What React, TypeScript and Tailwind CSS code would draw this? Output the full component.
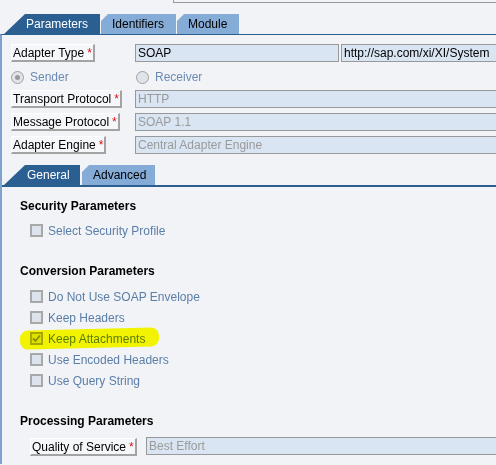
import React from 'react';

const FONT = "font-['Liberation_Sans',Arial,sans-serif]";

function LabelButton({ text, className = '' }: { text: string; className?: string }) {
  return (
    <div className={`h-[18px] flex items-center pl-[1px] pr-[1px] bg-[#f6f7fa] border-t border-l border-t-[#ffffff] border-l-[#ffffff] border-r-2 border-b-2 border-r-[#a3a3a3] border-b-[#a3a3a3] text-black whitespace-nowrap ${className}`}>
      {text}
      <span className="text-[#e01010] ml-[3px]">*</span>
    </div>
  );
}

function Field({ value, disabled, className = '' }: { value: string; disabled?: boolean; className?: string }) {
  return (
    <div className={`h-[18px] flex items-center px-[2px] bg-[#d9e5f3] border border-[#999999] whitespace-nowrap overflow-hidden ${disabled ? 'text-[#9a9a9a]' : 'text-black'} ${className}`}>
      {value}
    </div>
  );
}

function Radio({ checked }: { checked?: boolean }) {
  return (
    <span className="w-[13px] h-[13px] rounded-full border border-[#a0a0a0] bg-[#dfe3ea] flex items-center justify-center">
      {checked && <span className="w-[5px] h-[5px] rounded-full bg-[#9a9a9a]" />}
    </span>
  );
}

function Checkbox({ checked }: { checked?: boolean }) {
  return (
    <span className="w-[13px] h-[13px] border-2 border-[#a8a8a8] bg-[#dde3ec] flex items-center justify-center">
      {checked && (
        <svg width="9" height="9" viewBox="0 0 9 9">
          <path d="M1 4.5 L3.5 7 L8 1.5" fill="none" stroke="#8c8c8c" strokeWidth="1.8" />
        </svg>
      )}
    </span>
  );
}

function CheckRow({ label, checked, highlight }: { label: string; checked?: boolean; highlight?: boolean }) {
  return (
    <div className="relative h-[21px] flex items-center pl-[10px] gap-[5px]">
      <Checkbox checked={checked} />
      <span className="text-[#5a7ea8]">{label}</span>
      {highlight && (
        <span className="absolute left-0 top-[1px] w-[139px] h-[19px] rounded-[8px] -rotate-[1.5deg] bg-[#ffff00] mix-blend-multiply" />
      )}
    </div>
  );
}

function Tab({ label, active, first, className = '' }: { label: string; active?: boolean; first?: boolean; className?: string }) {
  const shape = first
    ? '[clip-path:polygon(21px_0,100%_0,100%_100%,0_100%)] pl-[22px]'
    : '[clip-path:polygon(7px_0,100%_0,100%_100%,0_100%,0_7px)] pl-[11px]';
  return (
    <div className={`h-[20px] flex items-center ${shape} ${active ? 'bg-[#2b5e91] text-white' : 'bg-[#85abd7] text-black'} ${className}`}>
      {label}
    </div>
  );
}

export default function App() {
  return (
    <div className={`w-[496px] h-[465px] overflow-hidden bg-[#f2f3f7] text-[12px] leading-[16px] ${FONT}`}>
      <div className="h-[3px] ml-[173px] border-l border-b border-[#9a9a9a]" />

      <div className="mt-[11px] flex pl-[4px]">
        <Tab label="Parameters" active first className="w-[96px]" />
        <Tab label="Identifiers" className="ml-[1px] w-[75px]" />
        <Tab label="Module" className="ml-[1px] w-[62px]" />
      </div>

      <div className="border-t border-t-[#2b5e91] border-l-2 border-l-[#7fa2cf] h-[430px]">
        <div className="pl-[9px] pt-[9px] flex flex-col gap-[5px]">
          <div className="flex">
            <div className="w-[124px]">
              <LabelButton text="Adapter Type" className="w-fit" />
            </div>
            <Field value="SOAP" className="w-[204px]" />
            <Field value="http://sap.com/xi/XI/System" className="ml-[2px] flex-1 -mr-[6px]" />
          </div>
          <div className="h-[18px] flex items-center mt-[1px]">
            <div className="w-[125px] flex items-center gap-[6px]">
              <Radio checked />
              <span className="text-[#6a8bb3]">Sender</span>
            </div>
            <div className="flex items-center gap-[6px]">
              <Radio />
              <span className="text-[#6a8bb3]">Receiver</span>
            </div>
          </div>
          <div className="flex -mt-[1px]">
            <div className="w-[124px]">
              <LabelButton text="Transport Protocol" className="w-fit" />
            </div>
            <Field value="HTTP" disabled className="flex-1 -mr-[6px]" />
          </div>
          <div className="flex">
            <div className="w-[124px]">
              <LabelButton text="Message Protocol" className="w-fit" />
            </div>
            <Field value="SOAP 1.1" disabled className="flex-1 -mr-[6px]" />
          </div>
          <div className="flex">
            <div className="w-[124px]">
              <LabelButton text="Adapter Engine" className="w-fit" />
            </div>
            <Field value="Central Adapter Engine" disabled className="flex-1 -mr-[6px]" />
          </div>
        </div>

        <div className="mt-[11px] flex pl-[2px]">
          <Tab label="General" active first className="w-[76px] pl-[23px]" />
          <Tab label="Advanced" className="ml-[2px] w-[73px]" />
        </div>
        <div className="h-[2px] bg-[#2b5e91]" />

        <div className="pl-[18px] pt-[11px]">
          <div className="font-bold text-black">Security Parameters</div>
          <div className="mt-[6px]">
            <CheckRow label="Select Security Profile" />
          </div>

          <div className="mt-[22px] font-bold text-black">Conversion Parameters</div>
          <div className="mt-[7px]">
            <CheckRow label="Do Not Use SOAP Envelope" />
            <CheckRow label="Keep Headers" />
            <CheckRow label="Keep Attachments" checked highlight />
            <CheckRow label="Use Encoded Headers" />
            <CheckRow label="Use Query String" />
          </div>

          <div className="mt-[22px] font-bold text-black">Processing Parameters</div>
          <div className="mt-[8px] flex items-start pl-[10px]">
            <div className="w-[116px]">
              <LabelButton text="Quality of Service" className="w-fit mt-[1px]" />
            </div>
            <Field value="Best Effort" disabled className="flex-1 -mr-[6px]" />
          </div>
        </div>
      </div>
    </div>
  );
}
